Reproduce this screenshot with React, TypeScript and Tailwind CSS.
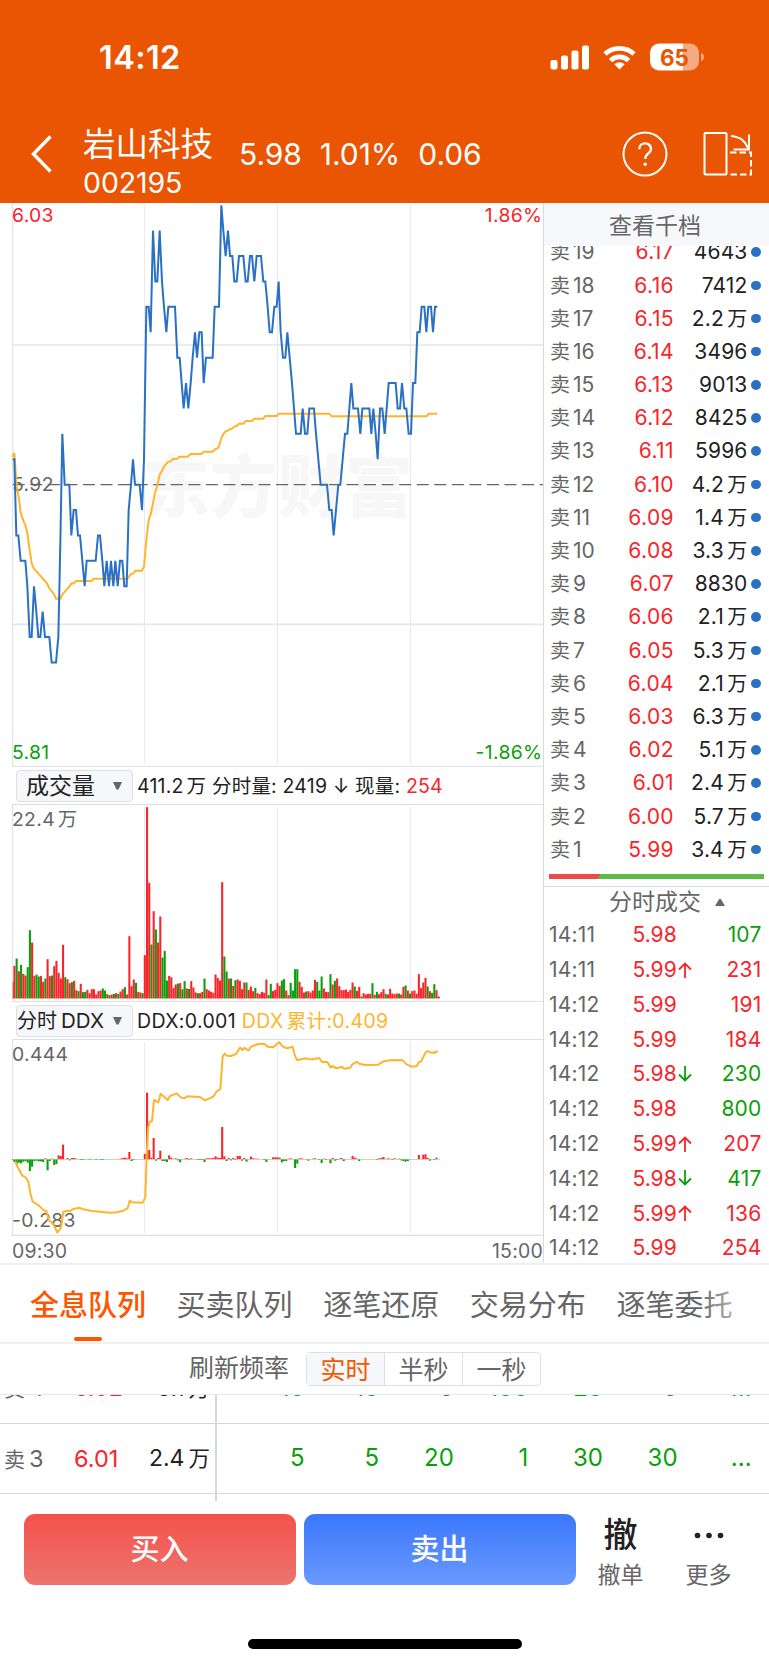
import React from 'react';
import clsx from 'clsx';

const UP = '#f8242a';
const DOWN = '#0a9f0a';
const GRID = '#e3e6ef';
const EDGE = '#dcdfe6';
const AVG = '#ffb52b';

// [x, ticks above the previous close], three units to a pixel
const PRICE: [number, number][] = [
  [38, 1], [43, 1], [49, -2], [55, -2], [62, -3], [76, -3], [82, -4], [89, -6], [95, -6], [102, -4], [109, -5], [115, -6],
  [121, -6], [128, -5], [135, -6], [148, -6], [155, -7], [168, -7], [175, -6], [181, -2.3], [187, 2], [194, 0], [208, 0],
  [214, -2], [221, -1], [228, -1], [234, -2], [240, -2], [247, -3], [254, -4], [260, -3], [287, -3], [294, -2], [300, -2],
  [307, -3], [313, -4], [320, -3], [327, -4], [333, -3], [340, -4], [346, -3], [353, -4], [360, -3], [367, -3], [373, -4],
  [380, -4], [386, -1], [393, 0], [399, 1], [405, 0], [419, 0], [426, -1], [432, 1], [439, 7], [446, 7], [452, 6], [459, 10],
  [466, 8], [472, 8], [479, 10], [486, 8], [492, 7], [499, 6], [505, 7], [525, 7], [532, 5], [539, 5], [545, 4], [551, 3],
  [558, 4], [565, 3], [572, 4], [578, 5], [585, 6], [591, 5], [598, 6], [605, 6], [611, 4], [618, 5], [638, 5], [644, 7],
  [657, 7], [664, 11], [670, 10], [677, 9], [684, 10], [690, 9], [697, 9], [703, 8], [710, 8], [717, 9], [730, 9], [737, 8],
  [743, 8], [750, 9], [756, 9], [763, 8], [770, 9], [783, 9], [790, 8], [796, 8], [803, 7], [809, 6], [816, 6], [823, 7],
  [830, 7], [836, 8], [842, 6], [849, 5], [856, 5], [862, 6], [869, 5], [876, 4], [888, 2], [902, 2], [908, 3], [915, 2],
  [922, 2], [928, 3], [942, 3], [948, 2], [955, 1], [962, 0], [981, 0], [988, -1], [995, -1], [1001, -2], [1008, -1],
  [1015, 0], [1021, 0], [1028, 1], [1035, 2], [1042, 2], [1048, 3], [1054, 4], [1060, 3], [1074, 3], [1081, 2], [1087, 3],
  [1108, 3], [1114, 2], [1120, 3], [1127, 2], [1133, 1], [1140, 3], [1147, 3], [1154, 2], [1160, 3], [1166, 4], [1187, 4],
  [1193, 3], [1200, 3], [1206, 4], [1213, 3], [1219, 3], [1226, 2], [1233, 2], [1239, 4], [1246, 4], [1252, 6], [1259, 6],
  [1265, 7], [1273, 7], [1279, 6], [1285, 7], [1293, 7], [1299, 6], [1305, 7], [1312, 7],
];

const AVERAGE =
  '38,762 43,750 47,808 50,851 56,881 62,929 69,951 76,966 82,991 89,1041 95,1081 101,1096 128,1126 141,1141 148,1156 162,1173 168,1187 181,1187 188,1173 201,1159 214,1142 222,1140 228,1134 275,1134 281,1127 382,1127 392,1114 400,1111 406,1103 426,1103 432,1091 439,1011 446,951 453,931 465,869 472,849 479,815 486,803 493,789 505,776 512,775 519,768 532,767 538,761 563,761 572,753 604,753 611,746 638,746 645,739 652,736 657,729 664,706 670,693 677,685 684,683 691,678 697,676 704,670 710,669 717,662 730,662 737,654 756,654 763,647 790,647 796,639 830,639 836,632 988,632 995,640 1280,640 1286,632 1312,632';

// one bar per minute: r = up, g = down
const VOLUME =
  'r50 r98 g120 r82 g101 r74 r69 g94 g205 r168 r68 g72 g66 r68 r50 g60 r118 r67 g69 r97 r113 r77 r60 r161 g64 r58 r46 g49 r53 r25 g22 r44 g19 g20 r26 r16 r28 r28 r12 r22 r24 g30 g24 r13 g10 r12 g14 r16 g14 r21 r28 g34 r12 r187 r37 r57 g47 r20 r18 g16 r130 r574 r347 g162 r262 g207 r168 r246 g123 g143 g54 r68 r64 r32 r42 g45 r46 g28 g52 r30 g29 r52 r33 r18 g16 r16 r20 g60 r28 r24 r20 r17 r72 r62 r54 r349 g126 g81 r60 g60 r38 g55 r57 r53 r28 r48 g48 r26 r36 r22 g32 r16 r13 r20 r17 r57 g10 g44 r22 r26 r46 r38 g54 g58 r24 r10 g47 g24 g88 g88 r50 r35 r18 g21 r22 r18 r24 r56 g50 g24 g66 r30 r20 r19 g73 r42 g53 r60 r37 r25 r25 r27 r20 r26 r48 g36 r23 r35 g6 r16 r12 r14 r14 g46 r11 g20 r13 r19 r28 g14 r12 r29 r15 r13 r15 g15 r12 r35 g39 r24 g15 r22 r24 r14 r73 r31 r48 r62 g36 r22 g17 g43 r25 r6'.split(' ');

const DDX =
  '0 -8 -15 -10 -12 -7 -5 -10 -35 -22 -5 -4 -6 -6 -8 3 -33 -5 2 -17 -14 12 10 44 0 4 -3 4 4 2 -1 -2 -2 -1 -1 -2 -1 -1 -2 -1 -2 -2 -1 -1 -1 -1 1 1 1 2 4 5 3 22 -5 -2 1 -1 -1 1 16 200 28 5 64 -4 4 26 -5 -5 -8 12 5 1 3 -3 -9 1 2 4 -2 3 1 -1 -2 -2 -2 -8 3 3 3 4 9 5 4 97 9 -5 4 -3 4 -2 10 10 -4 4 -7 -1 8 3 2 2 1 -1 -2 -8 -1 1 6 6 6 5 -9 -5 -5 2 3 -1 -26 -13 3 3 1 -1 -4 1 2 3 -1 -2 -11 2 -2 1 -12 4 -4 -2 2 4 -5 1 1 1 10 5 2 -5 -1 -1 -1 1 0 1 -1 -2 3 4 7 -1 3 2 -2 3 -1 2 -3 -5 -7 -5 -1 0 1 0 13 -1 14 15 4 -4 -1 -2 5 1'.split(' ').map(Number);

const DDX_TOTAL =
  '46,367 50,378 58,393 67,410 78,416 85,428 91,463 98,488 110,495 120,503 132,515 139,515 146,543 160,555 172,581 183,565 190,519 203,515 210,517 220,510 238,506 250,511 275,516 300,518 330,521 350,520 370,515 383,508 389,485 397,490 428,491 436,475 440,353 444,268 449,249 456,246 462,183 475,190 482,164 503,183 510,171 530,163 543,176 555,177 562,172 600,174 615,184 640,173 650,157 661,150 668,53 674,44 680,50 693,51 708,45 720,26 727,33 733,27 746,34 753,23 775,15 793,14 803,23 820,25 830,15 838,9 846,21 860,28 878,23 885,51 892,64 905,60 920,58 925,61 940,61 958,57 966,69 982,69 992,86 997,81 1008,87 1018,86 1024,83 1032,89 1051,86 1057,76 1071,68 1078,74 1095,78 1135,77 1150,67 1175,63 1208,64 1220,76 1235,83 1250,81 1257,69 1263,68 1277,40 1283,36 1290,40 1302,42 1313,36';

const ASKS: [number, string, string][] = [
  [19, '6.17', '4643'], [18, '6.16', '7412'], [17, '6.15', '2.2万'], [16, '6.14', '3496'], [15, '6.13', '9013'],
  [14, '6.12', '8425'], [13, '6.11', '5996'], [12, '6.10', '4.2万'], [11, '6.09', '1.4万'], [10, '6.08', '3.3万'],
  [9, '6.07', '8830'], [8, '6.06', '2.1万'], [7, '6.05', '5.3万'], [6, '6.04', '2.1万'], [5, '6.03', '6.3万'],
  [4, '6.02', '5.1万'], [3, '6.01', '2.4万'], [2, '6.00', '5.7万'], [1, '5.99', '3.4万'],
];

const TRADES = [
  { time: '14:11', price: '5.98', dir: '', qty: '107', up: false },
  { time: '14:11', price: '5.99', dir: '↑', qty: '231', up: true },
  { time: '14:12', price: '5.99', dir: '', qty: '191', up: true },
  { time: '14:12', price: '5.99', dir: '', qty: '184', up: true },
  { time: '14:12', price: '5.98', dir: '↓', qty: '230', up: false },
  { time: '14:12', price: '5.98', dir: '', qty: '800', up: false },
  { time: '14:12', price: '5.99', dir: '↑', qty: '207', up: true },
  { time: '14:12', price: '5.98', dir: '↓', qty: '417', up: false },
  { time: '14:12', price: '5.99', dir: '↑', qty: '136', up: true },
  { time: '14:12', price: '5.99', dir: '', qty: '254', up: true },
];

const QUEUE = [
  { level: '4', price: '6.02', qty: '5.1万', orders: ['10', '10', '5', '100', '20', '5'] },
  { level: '3', price: '6.01', qty: '2.4万', orders: ['5', '5', '20', '1', '30', '30'] },
];

const barX = (i: number) => 33.6 + i * 6.63;

const StatusBar = () => (
  <div className="flex h-[105px] items-start justify-between pl-[99px] pr-[65px] pt-[38px]">
    <span className="text-[32.5px] font-semibold leading-[40px] tracking-[0.4px]">14:12</span>
    <svg width="154" height="30" viewBox="0 0 154 30" className="mt-[4px]" fill="white">
      <rect x="0.5" y="18" width="7" height="9.5" rx="2" />
      <rect x="11" y="13.5" width="7" height="14" rx="2" />
      <rect x="21.5" y="8.5" width="7" height="19" rx="2" />
      <rect x="32" y="3.5" width="7" height="24" rx="2" />
      <g fill="none" stroke="white" strokeWidth="4.8">
        <path d="M55 12 A21.5 21.5 0 0 1 84 12" />
        <path d="M60.500 18.600 A12.800 12.800 0 0 1 78.500 18.600" />
      </g>
      <path d="M64.300 22.300 A7.400 7.400 0 0 1 74.700 22.300 L69.500 27.500 Z" />
      <path d="M109 1.500 h24 v27 h-24 a9 9 0 0 1 -9 -9 v-9 a9 9 0 0 1 9 -9 Z" />
      <path d="M133 1.500 h7 a9 9 0 0 1 9 9 v9 a9 9 0 0 1 -9 9 h-7 Z" fill="#f5ab80" />
      <path d="M151 11 q3 1 3 4 t-3 4 Z" fill="#f5ab80" />
      <text x="124.500" y="23.500" textAnchor="middle" fontSize="22.500" fontWeight="700" fill="#ea5504">65</text>
    </svg>
  </div>
);

const TitleBar = () => (
  <div className="flex h-[98px] items-center">
    <svg width="24" height="42" viewBox="0 0 24 42" className="ml-[30px]" fill="none" stroke="white" strokeWidth="3.4">
      <path d="M20.500 3.500 L3.500 21 L20.500 38.500" />
    </svg>
    <div className="ml-[29px] w-[130px] pt-[17px]">
      <div className="text-[32.5px] leading-[39px]">岩山科技</div>
      <div className="text-[28.5px] leading-[37px] tracking-[-0.1px]">002195</div>
    </div>
    <div className="ml-[26px] flex w-[383px] gap-[18px] pt-px text-[30px] tracking-[-0.05px]">
      <span>5.98</span>
      <span>1.01%</span>
      <span>0.06</span>
    </div>
    <svg width="46" height="46" viewBox="0 0 46 46" className="shrink-0" fill="none" stroke="white">
      <circle cx="23" cy="23" r="21.500" strokeWidth="2" />
      <path d="M17.200 18.300 C17.200 10.500 29 10.500 29 18 C29 22.500 23.200 22.500 23.200 28" strokeWidth="2.400" />
      <circle cx="23.200" cy="33.300" r="1.700" fill="white" stroke="none" />
    </svg>
    <svg width="50" height="46" viewBox="0 0 50 46" className="ml-[34.500px] shrink-0" fill="none" stroke="white" strokeWidth="2">
      <rect x="1.500" y="2" width="22" height="41.500" rx="1" />
      <path d="M28 5 C38 6 42 10 45 17.500" />
      <path d="M46 3.500 V18.500 H30.500" />
      <path d="M27 21.500 H48 V43.500 H25" strokeDasharray="6.500 3" />
    </svg>
  </div>
);

const Columns = ({ top, bottom }: { top: number; bottom: number }) => (
  <g stroke={GRID} strokeWidth="3">
    {[433, 832, 1231].map((x) => (
      <line key={x} x1={x} x2={x} y1={top} y2={bottom} />
    ))}
  </g>
);

const PriceChart = () => (
  <svg className="block h-[564px] w-[544px]" viewBox="0 0 1632 1692">
    <text x="427" y="926" fontSize="203" fontWeight="900" fill="#f7f7f7">东方财富</text>
    <line x1="38" x2="38" y1="0" y2="1690" stroke={EDGE} strokeWidth="3" />
    <Columns top={6} bottom={1682} />
    <path d="M38 426 H1631 M38 1264 H1631" stroke={GRID} strokeWidth="5" />
    <path d="M38 1690 H1631" stroke={EDGE} strokeWidth="3" />
    <g fontSize="58" letterSpacing="1">
      <text x="36" y="58" fill={UP}>6.03</text>
      <text x="1627" y="58" textAnchor="end" fill={UP}>1.86%</text>
      <text x="36" y="864" fill="#666">5.92</text>
      <text x="36" y="1668" fill={DOWN}>5.81</text>
      <text x="1627" y="1668" textAnchor="end" fill={DOWN}>-1.86%</text>
    </g>
    <line x1="38" x2="1631" y1="845" y2="845" stroke="#666" strokeWidth="4" strokeDasharray="36 16.700" />
    <polyline points={AVERAGE} fill="none" stroke={AVG} strokeWidth="6" />
    <polyline points={PRICE.map(([x, t]) => `${x},${845 - t * 76.2}`).join(' ')} fill="none" stroke="#2a71c4" strokeWidth="6" />
  </svg>
);

const VolumeChart = () => (
  <svg className="block h-[198px] w-[544px]" viewBox="0 0 1632 594">
    <line x1="38" x2="38" y1="0" y2="592" stroke={EDGE} strokeWidth="3" />
    <path d="M36 1.500 H1631 M36 592 H1631" stroke={EDGE} strokeWidth="3" />
    <Columns top={9} bottom={584} />
    <text x="36" y="67" fontSize="58" letterSpacing="1" fill="#666">22.4<tspan dx="8">万</tspan></text>
    {VOLUME.map((bar, i) => {
      const h = Number(bar.slice(1));
      return <rect key={i} x={Math.max(barX(i), 38)} y={583.5 - h} width={i ? 6.2 : 3} height={h} fill={bar[0] === 'r' ? UP : DOWN} />;
    })}
  </svg>
);

const DdxChart = () => (
  <svg className="block h-[197px] w-[544px]" viewBox="0 0 1632 591">
    <line x1="38" x2="38" y1="0" y2="589" stroke={EDGE} strokeWidth="3" />
    <path d="M36 1.500 H1631 M36 589 H1631" stroke={EDGE} strokeWidth="3.500" />
    <Columns top={9} bottom={583} />
    <text x="36" y="67" fontSize="58" letterSpacing="1" fill="#666">0.444</text>
    <text x="36" y="564" fontSize="58" letterSpacing="1" fill="#666">-0.283</text>
    {DDX.map((v, i) => (
      <rect key={i} x={barX(i)} y={v > 0 ? 361 - v : 361} width="6.200" height={Math.max(Math.abs(v), 1)} fill={v > 0 ? UP : DOWN} />
    ))}
    <polyline points={DDX_TOTAL} fill="none" stroke={AVG} strokeWidth="6" strokeLinejoin="round" />
  </svg>
);

const Picker = ({ label, className }: { label: React.ReactNode; className: string }) => (
  <div className="flex h-[32px] w-[117px] shrink-0 items-center justify-between rounded-[4px] border border-[#dcdfe4] bg-[#f6f7fa] pr-[10px] text-[#222]">
    <span className={clsx('whitespace-nowrap', className)}>{label}</span>
    <svg width="9" height="8" viewBox="0 0 9 8" className="shrink-0" fill="#666">
      <path d="M0 0 H9 L5.500 7.500 H3.500 Z" />
    </svg>
  </div>
);

const OrderBook = () => (
  <div className="flex w-[226px] flex-col border-l border-[#d8dbe3] bg-white text-[21px]">
    <div className="h-[43px] shrink-0 bg-[#f7f8fb] text-center text-[23px] leading-[46px] text-[#666]">
      <span className="-ml-[3px]">查看千档</span>
    </div>
    <div className="h-[620px] shrink-0 overflow-hidden">
      <div className="-mt-[10.500px]">
        {ASKS.map(([level, price, qty]) => (
          <div key={level} className="flex h-[33.200px] items-center pl-[6px] pr-[8.500px]">
            <span className="w-[54px] shrink-0 text-[#666]">
              <span className="text-[20px]">卖</span>
              <span className="ml-[3px]">{level}</span>
            </span>
            <span className="w-[70px] shrink-0 text-right tracking-[0.4px] text-[#f8242a]">{price}</span>
            <span className="flex-1 text-right tracking-[0.15px] text-[#222]">
              {qty.replace('万', '')}
              {qty.endsWith('万') && <span className="ml-[3.500px] text-[20px]">万</span>}
            </span>
            <span className="ml-[3.500px] size-[9.500px] shrink-0 rounded-full bg-[#2a71c4]" />
          </div>
        ))}
      </div>
    </div>
    <svg width="215" height="5" viewBox="0 0 215 5" className="mb-[7px] ml-[5px] mt-[8px] block shrink-0">
      <rect width="215" height="5" fill="#5dbb46" />
      <path d="M0 0 H52 L48 5 H0 Z" fill="#ee4a4a" />
    </svg>
    <div className="flex h-[31px] shrink-0 items-center border-t border-[#d8dbe3] pl-[65px] text-[23px] text-[#666]">
      分时成交
      <svg width="10" height="7" viewBox="0 0 10 7" className="ml-[14px]" fill="#666">
        <path d="M0 7 L4.200 0 H5.800 L10 7 Z" />
      </svg>
    </div>
    {TRADES.map((t, i) => (
      <div key={i} className="flex h-[34.800px] shrink-0 items-center pl-[5px] pr-[7.500px] pt-px">
        <span className="w-[83.500px] tracking-[0.2px] text-[#666]">{t.time}</span>
        <span className="text-[#f8242a]">{t.price}</span>
        {t.dir && (
          <svg width="14" height="16" viewBox="0 0 14 16" className="ml-[1px]" fill="none" stroke={t.dir === '↑' ? UP : DOWN} strokeWidth="1.800">
            <path d={t.dir === '↑' ? 'M7 16 V1.500 M1 7.500 L7 1.500 L13 7.500' : 'M7 0 V14.500 M1 8.500 L7 14.500 L13 8.500'} />
          </svg>
        )}
        <span className={clsx('flex-1 text-right tracking-[0.2px]', t.up ? 'text-[#f8242a]' : 'text-[#0a9f0a]')}>{t.qty}</span>
      </div>
    ))}
  </div>
);

const Tabs = () => (
  <div className="relative flex h-[79px] shrink-0 gap-[30.600px] overflow-hidden border-b-2 border-[#efeff2] pl-[30px] text-[29px] leading-[82px] text-[#666]">
    <div className="relative h-[77px] shrink-0 font-medium text-[#ff5500]">
      全息队列
      <span className="absolute bottom-[1px] left-[44px] h-[4px] w-[28px] rounded-[2px] bg-[#ff5500]" />
    </div>
    {['买卖队列', '逐笔还原', '交易分布', '逐笔委托'].map((tab) => (
      <div key={tab} className="shrink-0">{tab}</div>
    ))}
    <div className="absolute right-0 top-0 h-[76px] w-[70px] bg-linear-to-r from-white/0 to-white" />
  </div>
);

const QueueTable = () => (
  <div className="flex h-[106px] shrink-0 flex-col overflow-hidden">
    <div className="-mt-[42px]">
      {QUEUE.map((row) => (
        <div key={row.level} className="flex h-[70.500px] items-center border-b-[1.500px] border-[#d4d7de]">
          <div className="flex h-full w-[217px] shrink-0 items-center border-r-2 border-[#d4d7de] pl-[4px] pr-[5px]">
            <span className="w-[70px] text-[21px] text-[#666]">
              卖<span className="ml-[4px] text-[23.500px]">{row.level}</span>
            </span>
            <span className="text-[23.500px] text-[#f8242a]">{row.price}</span>
            <span className="flex-1 text-right text-[23px] text-[#222]">
              {row.qty.replace('万', '')}
              <span className="ml-[4px] text-[21.500px]">万</span>
            </span>
          </div>
          <div className="flex pl-[13px] text-[24px] text-[#0a9f0a]">
            {row.orders.map((n, i) => (
              <span key={i} className="w-[74.600px] text-right">{n}</span>
            ))}
            <span className="w-[74px] text-right">...</span>
          </div>
        </div>
      ))}
      <div className="h-[20px] w-[217px] border-r-2 border-[#d4d7de]" />
    </div>
  </div>
);

export default function App() {
  return (
    <div className="flex h-[1665px] w-[769px] flex-col overflow-hidden bg-white font-['Inter','Noto_Sans_CJK_SC',sans-serif]">
      <header className="h-[203px] shrink-0 bg-[#ea5504] text-white">
        <StatusBar />
        <TitleBar />
      </header>

      <main className="flex h-[1062px] shrink-0 overflow-hidden border-b-2 border-[#efeff2]">
        <div className="w-[543px] shrink-0">
          <PriceChart />
          <div className="flex h-[37px] items-center gap-[4px] whitespace-nowrap pl-[16px] text-[#222]">
            <Picker label="成交量" className="pl-[9px] pt-px text-[23px]" />
            <span className="pt-[2px] text-[19.500px] tracking-[0.2px]">
              411.2<span className="ml-[3px]">万</span> 分时量: 2419 ↓ 现量: <span className="text-[#f8242a]">254</span>
            </span>
          </div>
          <VolumeChart />
          <div className="flex h-[37px] items-center gap-[4px] whitespace-nowrap pl-[16px] text-[#222]">
            <Picker
              label={<>分时<span className="ml-[4px] text-[20.500px]">DDX</span></>}
              className="pt-px text-[20px]"
            />
            <span className="pt-[3px] text-[19.500px] tracking-[0.350px]">
              DDX:0.001 <span className="text-[#ffb52b]">DDX<span className="ml-[3px]">累计</span>:0.409</span>
            </span>
          </div>
          <DdxChart />
          <div className="flex h-[31px] items-center justify-between pl-[12px] text-[19.500px] tracking-[0.2px] text-[#666]">
            <span>09:30</span>
            <span>15:00</span>
          </div>
        </div>
        <OrderBook />
      </main>

      <Tabs />

      <div className="flex h-[51px] shrink-0 items-center border-b border-[#e6e8ec] pl-[189px] text-[25px] text-[#666]">
        刷新频率
        <div className="ml-[17px] flex h-[34px] w-[235px] rounded-[4px] border-[1.500px] border-[#dcdfe6] text-center leading-[34px]">
          <div className="flex-1 bg-[#f6f7fa] text-[#f05a00]">实时</div>
          <div className="flex-1 border-x-[1.500px] border-[#dcdfe6]">半秒</div>
          <div className="flex-1">一秒</div>
        </div>
      </div>

      <QueueTable />

      <footer className="flex shrink-0 pl-[23.500px] pt-[13px]">
        <button className="h-[71px] w-[272px] rounded-[11px] bg-linear-to-b from-[#f5504b] to-[#eb736d] pt-px text-[29px] font-medium text-white">买入</button>
        <button className="ml-[8px] h-[71px] w-[272px] rounded-[11px] bg-linear-to-b from-[#3a77fa] to-[#6998ff] pt-px text-[29px] font-medium text-white">卖出</button>
        <div className="ml-[21px] flex w-[48px] flex-col items-center pt-px">
          <span className="text-[34px] font-medium leading-[40px] text-[#222]">撤</span>
          <span className="text-[23px] leading-[40px] text-[#666]">撤单</span>
        </div>
        <div className="ml-[40px] flex w-[48px] flex-col items-center pt-px">
          <svg width="30" height="40" viewBox="0 0 30 40" fill="#222">
            <circle cx="3.500" cy="20.500" r="2.800" />
            <circle cx="15" cy="20.500" r="2.800" />
            <circle cx="26.500" cy="20.500" r="2.800" />
          </svg>
          <span className="text-[23px] leading-[40px] text-[#666]">更多</span>
        </div>
      </footer>

      <div className="mt-auto mb-[16px] ml-[248px] h-[10px] w-[274px] rounded-full bg-black" />
    </div>
  );
}
